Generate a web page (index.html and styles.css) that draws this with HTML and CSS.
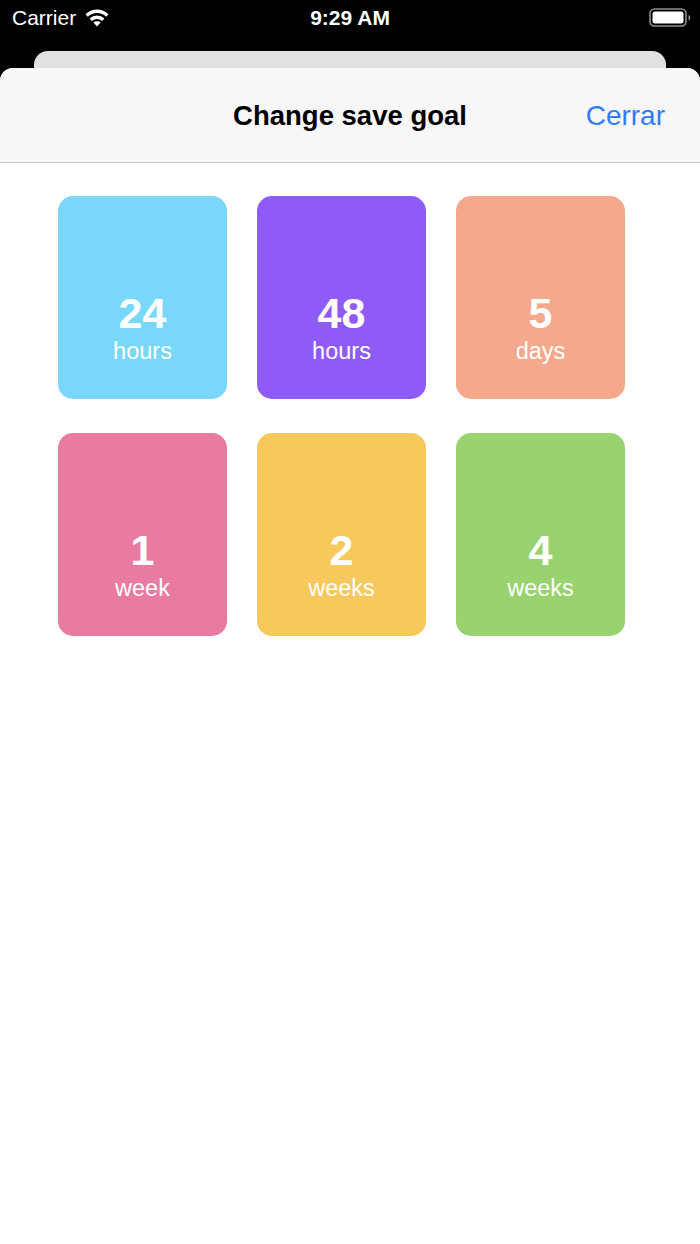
FILE: index.html
```html
<!DOCTYPE html>
<html lang="en">
<head>
    <meta charset="UTF-8">
    <meta name="viewport" content="width=device-width, initial-scale=1.0">
    <title>Change save goal</title>
    <link rel="stylesheet" href="styles.css">
</head>
<body>
    <div class="statusbar">
        <div class="carrier">
            Carrier
            <svg class="wifi" width="26" height="20" viewBox="0 0 26 20">
                <path d="M13 19.5l3.6-3.9a5.2 5.2 0 0 0-7.2 0z" fill="#fff"/>
                <path d="M5.6 11.6a10.6 10.6 0 0 1 14.8 0l-2.3 2.4a7.3 7.3 0 0 0-10.2 0z" fill="#fff"/>
                <path d="M1.5 7.3a16.4 16.4 0 0 1 23 0l-2.3 2.4a13.1 13.1 0 0 0-18.4 0z" fill="#fff"/>
            </svg>
        </div>
        <div class="clock">9:29 AM</div>
        <div class="battery">
            <svg width="42" height="20" viewBox="0 0 42 20">
                <rect x="1" y="1" width="36" height="17" rx="4.5" fill="none" stroke="#8e8e8e" stroke-width="1.6"/>
                <rect x="3.5" y="3.5" width="31" height="12" rx="2.5" fill="#fff"/>
                <path d="M39.5 7v5.5c1.2-.3 1.8-1.4 1.8-2.75S40.7 7.3 39.5 7z" fill="#8e8e8e"/>
            </svg>
        </div>
    </div>

    <div class="backcard"></div>

    <section class="sheet">
        <header class="sheet-head">
            <h1>Change save goal</h1>
            <a class="close">Cerrar</a>
        </header>

        <div class="goals">
            <div class="goal blue"><b>24</b><span>hours</span></div>
            <div class="goal purple"><b>48</b><span>hours</span></div>
            <div class="goal salmon"><b>5</b><span>days</span></div>
            <div class="goal pink"><b>1</b><span>week</span></div>
            <div class="goal yellow"><b>2</b><span>weeks</span></div>
            <div class="goal green"><b>4</b><span>weeks</span></div>
        </div>
    </section>
</body>
</html>
```

FILE: styles.css
```css
* { margin: 0; padding: 0; box-sizing: border-box; }
html, body { height: 100%; }
body { background: #000; font-family: "Liberation Sans", Arial, sans-serif; display: flex; flex-direction: column; overflow: hidden; }

.statusbar { height: 51px; display: flex; align-items: flex-start; justify-content: space-between; padding: 5px 10px 0 12px; color: #fff; position: relative; }
.carrier { font-size: 21px; display: flex; align-items: center; gap: 8px; line-height: 26px; }
.wifi { margin-top: -3px; }
.clock { position: absolute; left: 0; right: 0; top: 5px; text-align: center; font-size: 21px; font-weight: bold; line-height: 26px; }
.battery { margin-top: 3px; margin-right: -1px; }

.backcard { height: 17px; margin: 0 34px; background: #e1e1e1; border-radius: 14px 14px 0 0; }

.sheet { flex: 1; background: #fff; border-radius: 13px 13px 0 0; overflow: hidden; }
.sheet-head { height: 95px; background: #f7f7f7; border-bottom: 1px solid #c8c8c8; display: flex; align-items: center; justify-content: center; position: relative; }
.sheet-head h1 { font-size: 27.5px; font-weight: bold; color: #000; margin-top: 2px; }
.close { position: absolute; right: 35px; top: 31px; font-size: 28px; color: #2f7cf6; line-height: 34px; }

.goals { display: grid; grid-template-columns: repeat(3, 169px); column-gap: 30px; row-gap: 34px; padding: 33px 0 0 58px; }
.goal { height: 203px; border-radius: 15px; color: #fff; display: flex; flex-direction: column; align-items: center; justify-content: flex-end; padding-bottom: 34px; }
.goal b { font-size: 43px; line-height: 42px; }
.goal span { font-size: 23.5px; line-height: 28px; margin-top: 3px; }

.blue { background: #7ad7f9; }
.purple { background: #8e5bf7; }
.salmon { background: #f4a88c; }
.pink { background: #e97ba3; }
.yellow { background: #f7c85b; }
.green { background: #98d36f; }
```
